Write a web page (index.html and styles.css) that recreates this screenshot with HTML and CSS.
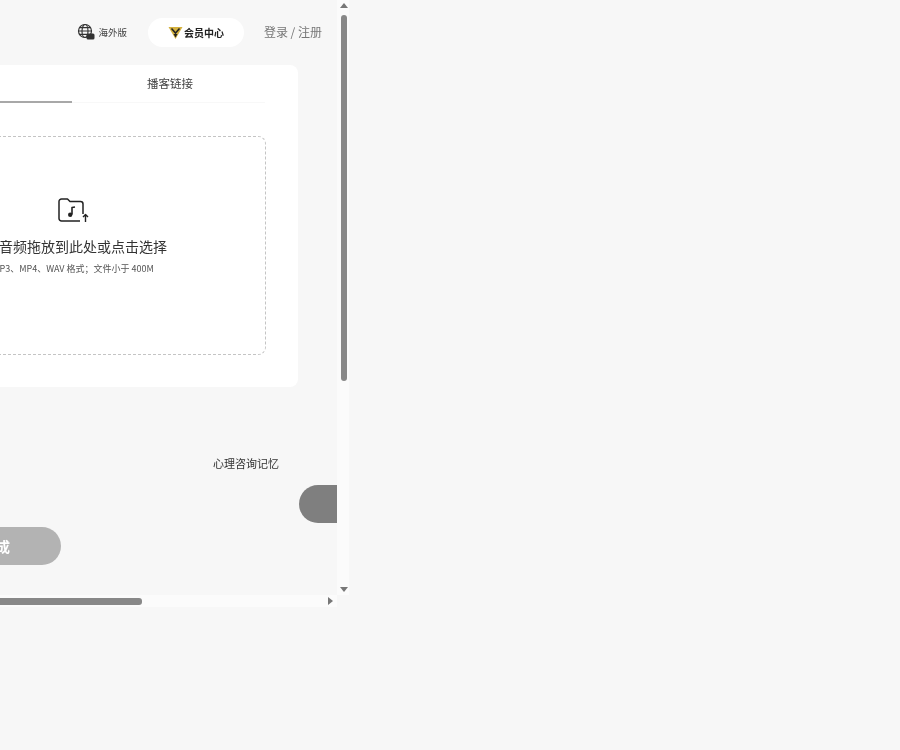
FILE: index.html
```html
<!DOCTYPE html>
<html lang="zh-CN">
<head>
<meta charset="utf-8">
<title>音频上传</title>
<link rel="stylesheet" href="styles.css">
</head>
<body>
<div class="frame">
  <div class="viewport">
    <div class="page">
      <header class="topbar">
        <a class="lang">
          <svg class="globe" viewBox="0 0 18 18" width="18" height="18" fill="none" stroke="#333" stroke-width="1.2"><circle cx="8" cy="8" r="6.5"/><ellipse cx="8" cy="8" rx="3" ry="6.5"/><path d="M1.5 8h13M2.5 4.600h11M2.500 11.400h8"/><rect x="9.500" y="10.500" width="8" height="6" rx="1.500" fill="#333" stroke="none"/></svg>
          <span>海外版</span>
        </a>
        <a class="vip">
          <svg viewBox="0 0 15 14" width="15" height="14"><path d="M0.500 1h14L7.500 13z" fill="#d4b13f"/><path d="M3.500 2.500l4 4.500 4-4.500" fill="none" stroke="#222" stroke-width="1.500"/><path d="M5.500 8h4L7.500 11.500z" fill="#222"/></svg>
          <span>会员中心</span>
        </a>
        <a class="login">登录 / 注册</a>
      </header>
      <section class="card">
        <div class="tabs">
          <div class="tab tab-active">上传音频</div>
          <div class="tab tab-second">播客链接</div>
        </div>
        <div class="drop">
          <svg class="folder" viewBox="0 0 32 26" width="32" height="26" fill="none" stroke="#222" stroke-width="1.500" stroke-linejoin="round"><path d="M25 16V6a2.500 2.500 0 0 0-2.500-2.500H12L9.500 1H3.500A2.500 2.500 0 0 0 1 3.500v17A2.500 2.500 0 0 0 3.500 23h18.500"/><path d="M14 16.500V9.500l3-.5" stroke-width="1.600"/><circle cx="12.200" cy="16.800" r="2.200" fill="#222" stroke="none"/><path d="M27.500 24v-7M25 19l2.500-2.500L30 19" stroke-width="1.400"/></svg>
          <p class="drop-title">将音频拖放到此处或点击选择</p>
          <p class="drop-sub">MP3、MP4、WAV 格式；文件小于 400M</p>
        </div>
      </section>
      <div class="option">心理咨询记忆</div>
      <div class="actions">
        <div class="side-row"><div class="side-tab"></div></div>
        <button class="submit">开始生成</button>
      </div>
    </div>
  </div>
  <div class="vbar">
    <i class="arrow-up"></i>
    <div class="vtrack"><div class="vthumb"></div></div>
    <i class="arrow-down"></i>
  </div>
  <div class="hbar">
    <div class="hthumb"></div>
    <i class="arrow-right"></i>
  </div>
</div>
</body>
</html>
```
FILE: styles.css
```css
* { box-sizing: border-box; }
html, body { margin: 0; height: 100%; }
body {
  background: #f7f7f7;
  font-family: "Noto Sans CJK SC", "Noto Sans", sans-serif;
  color: #333;
  overflow: hidden;
}
p { margin: 0; }
.frame {
  width: 349px;
  height: 607px;
  display: grid;
  grid-template-columns: 337px 12px;
  grid-template-rows: 595px 12px;
  filter: blur(0.45px);
}
.viewport {
  overflow: hidden;
  display: flex;
  justify-content: flex-end;
}
.page { width: 500px; flex: none; }
.topbar {
  height: 65px;
  padding: 18px 15px 0 0;
  display: flex;
  justify-content: flex-end;
  align-items: flex-start;
}
.lang {
  height: 28px;
  display: flex;
  align-items: center;
  gap: 3px;
  font-size: 9.500px;
  color: #444;
  margin-right: 21px;
}
.vip {
  width: 96px;
  height: 29px;
  background: #fff;
  border-radius: 15px;
  display: flex;
  align-items: center;
  padding-left: 20px;
  gap: 1px;
  font-size: 10px;
  font-weight: 700;
  color: #222;
  margin-right: 20px;
}
.login {
  height: 29px;
  line-height: 28px;
  font-size: 12px;
  color: #777;
}
.card {
  width: 450px;
  height: 322px;
  margin: 0 39px 0 auto;
  background: #fff;
  border-radius: 8px;
  padding: 0 32px;
}
.tabs {
  display: flex;
  height: 38px;
  border-bottom: 1px solid #f8f8f8;
  margin-right: 1px;
}
.tab {
  text-align: center;
  font-size: 11.500px;
  line-height: 36px;
  color: #444;
}
.tab-active { width: 192px; border-bottom: 2px solid #a8a8a8; height: 38px; }
.tab-second { width: 193px; padding-left: 3px; }
.drop {
  margin-top: 33px;
  height: 219px;
  border: 1px dashed #c4c4c4;
  border-radius: 8px;
  display: flex;
  flex-direction: column;
  align-items: center;
  padding-top: 61px;
}
.folder { margin-left: 1px; }
.drop-title {
  font-size: 14px;
  line-height: 20px;
  color: #333;
  margin: 12px 0 0 6px;
}
.drop-sub {
  font-size: 9px;
  line-height: 14px;
  color: #555;
  margin-top: 6px;
}
.option {
  margin: 68px 58px 0 0;
  text-align: right;
  font-size: 11px;
  line-height: 16px;
  color: #333;
}
.actions {
  margin-top: 14px;
  display: flex;
  flex-direction: column;
}
.side-row {
  display: flex;
  justify-content: flex-end;
}
.side-tab {
  width: 38px;
  height: 38px;
  background: #7f7f7f;
  border-radius: 19px 0 0 19px;
}
.submit {
  width: 180px;
  height: 38px;
  margin: 4px 0 0 44px;
  border: 0;
  border-radius: 19px;
  background: #b3b3b3;
  color: #fff;
  font: 700 14px "Noto Sans CJK SC", sans-serif;
  padding: 0 0 0 22px;
}
.vbar {
  grid-row: 1;
  grid-column: 2;
  background: #fbfbfb;
  display: flex;
  flex-direction: column;
  align-items: center;
  padding: 3px 0 3px 2px;
}
.vtrack { flex: 1; width: 100%; padding: 7px 0 0 2px; }
.vthumb { height: 366px; width: 6px; background: #888; border-radius: 3px; }
.hbar {
  grid-row: 2;
  grid-column: 1;
  background: #fbfbfb;
  display: flex;
  align-items: center;
  justify-content: space-between;
  padding-right: 4px;
}
.hthumb { width: 142px; height: 7px; background: #888; border-radius: 0 3px 3px 0; }
.arrow-up, .arrow-down, .arrow-right { width: 0; height: 0; display: block; flex: none; }
.arrow-up { border: 4px solid transparent; border-top: 0; border-bottom: 5px solid #777; }
.arrow-down { border: 4px solid transparent; border-bottom: 0; border-top: 5px solid #777; }
.arrow-right { border: 4px solid transparent; border-right: 0; border-left: 5px solid #777; }
```
